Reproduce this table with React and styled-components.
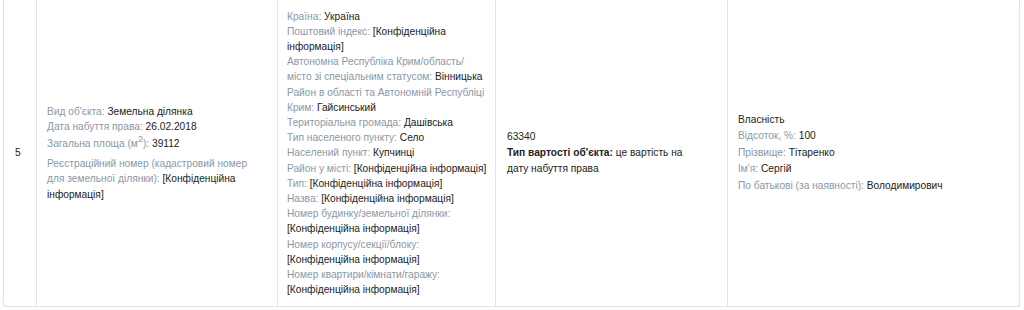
import React from 'react';
import styled, { createGlobalStyle } from 'styled-components';

const GlobalStyle = createGlobalStyle`
    body {
        margin: 0;
        background: #fff;
        font-family: "Liberation Sans", Arial, sans-serif;
        font-size: 10.2px;
        color: #2b2b2b;
    }
`;

const Card = styled.div`
    margin: 0 4px 0 3px;
    border: 1px solid #e4e4e4;
    border-top: none;
    border-radius: 0 0 4px 4px;
    box-shadow: 0 1px 2px rgba(0, 0, 0, 0.07);
    background: #fff;
`;

const Row = styled.div`
    display: grid;
    grid-template-columns: 32px 241px 218px 232px 1fr;
    min-height: 306px;
`;

const Cell = styled.div`
    display: flex;
    flex-direction: column;
    justify-content: center;
    padding: ${props => props.pad || '8px 10px'};
    border-left: ${props => props.first ? 'none' : '1px solid #e4e4e4'};
    line-height: ${props => props.lh || '15.2px'};
`;

const Line = styled.div`
    margin-top: ${props => props.gap || '0'};
`;

const Label = styled.span`
    color: #8b97a8;
`;

const Value = styled.span`
    color: #222;
`;

const Bold = styled.b`
    font-weight: bold;
    color: #222;
`;

const Sup = styled.sup`
    font-size: 9px;
    line-height: 0;
    vertical-align: 5px;
`;

const SMALL = '[Конфіденційна інформація]';

const address = [
    ['Країна', 'Україна'],
    ['Поштовий індекс', SMALL],
    ['Автономна Республіка Крим/область/ місто зі спеціальним статусом', 'Вінницька'],
    ['Район в області та Автономній Республіці Крим', 'Гайсинський'],
    ['Територіальна громада', 'Дашівська'],
    ['Тип населеного пункту', 'Село'],
    ['Населений пункт', 'Купчинці'],
    ['Район у місті', SMALL],
    ['Тип', SMALL],
    ['Назва', SMALL],
    ['Номер будинку/земельної ділянки', SMALL, true],
    ['Номер корпусу/секції/блоку', SMALL, true],
    ['Номер квартири/кімнати/гаражу', SMALL, true],
];

const owner = [
    ['Відсоток, %', '100'],
    ['Прізвище', 'Тітаренко'],
    ['Ім\'я', 'Сергій'],
    ['По батькові (за наявності)', 'Володимирович'],
];

const App = () => {
    return (
        <>
            <GlobalStyle />
            <Card>
                <Row>
                    <Cell first pad="8px 11px">
                        <Value>5</Value>
                    </Cell>
                    <Cell pad="8px 22px 8px 10px" lh="15.6px">
                        <Line><Label>Вид об'єкта:</Label> <Value>Земельна ділянка</Value></Line>
                        <Line><Label>Дата набуття права:</Label> <Value>26.02.2018</Value></Line>
                        <Line gap="1px"><Label>Загальна площа (м<Sup>2</Sup>):</Label> <Value>39112</Value></Line>
                        <Line gap="4px">
                            <Label>Реєстраційний номер (кадастровий номер для земельної ділянки):</Label> <Value>{SMALL}</Value>
                        </Line>
                    </Cell>
                    <Cell pad="8px 5px 8px 9px">
                        {address.map((item, index) => (
                            <Line key={index}>
                                <Label>{item[0]}:</Label>
                                {item[2] ? <br /> : ' '}
                                <Value>{item[1]}</Value>
                            </Line>
                        ))}
                    </Cell>
                    <Cell pad="8px 32px 8px 11px" lh="16px">
                        <Line><Value>63340</Value></Line>
                        <Line><Bold>Тип вартості об'єкта:</Bold> <Value>це вартість на дату набуття права</Value></Line>
                    </Cell>
                    <Cell lh="16.5px">
                        <Line><Value>Власність</Value></Line>
                        {owner.map((item, index) => (
                            <Line key={index}><Label>{item[0]}:</Label> <Value>{item[1]}</Value></Line>
                        ))}
                    </Cell>
                </Row>
            </Card>
        </>
    );
}

export default App;
